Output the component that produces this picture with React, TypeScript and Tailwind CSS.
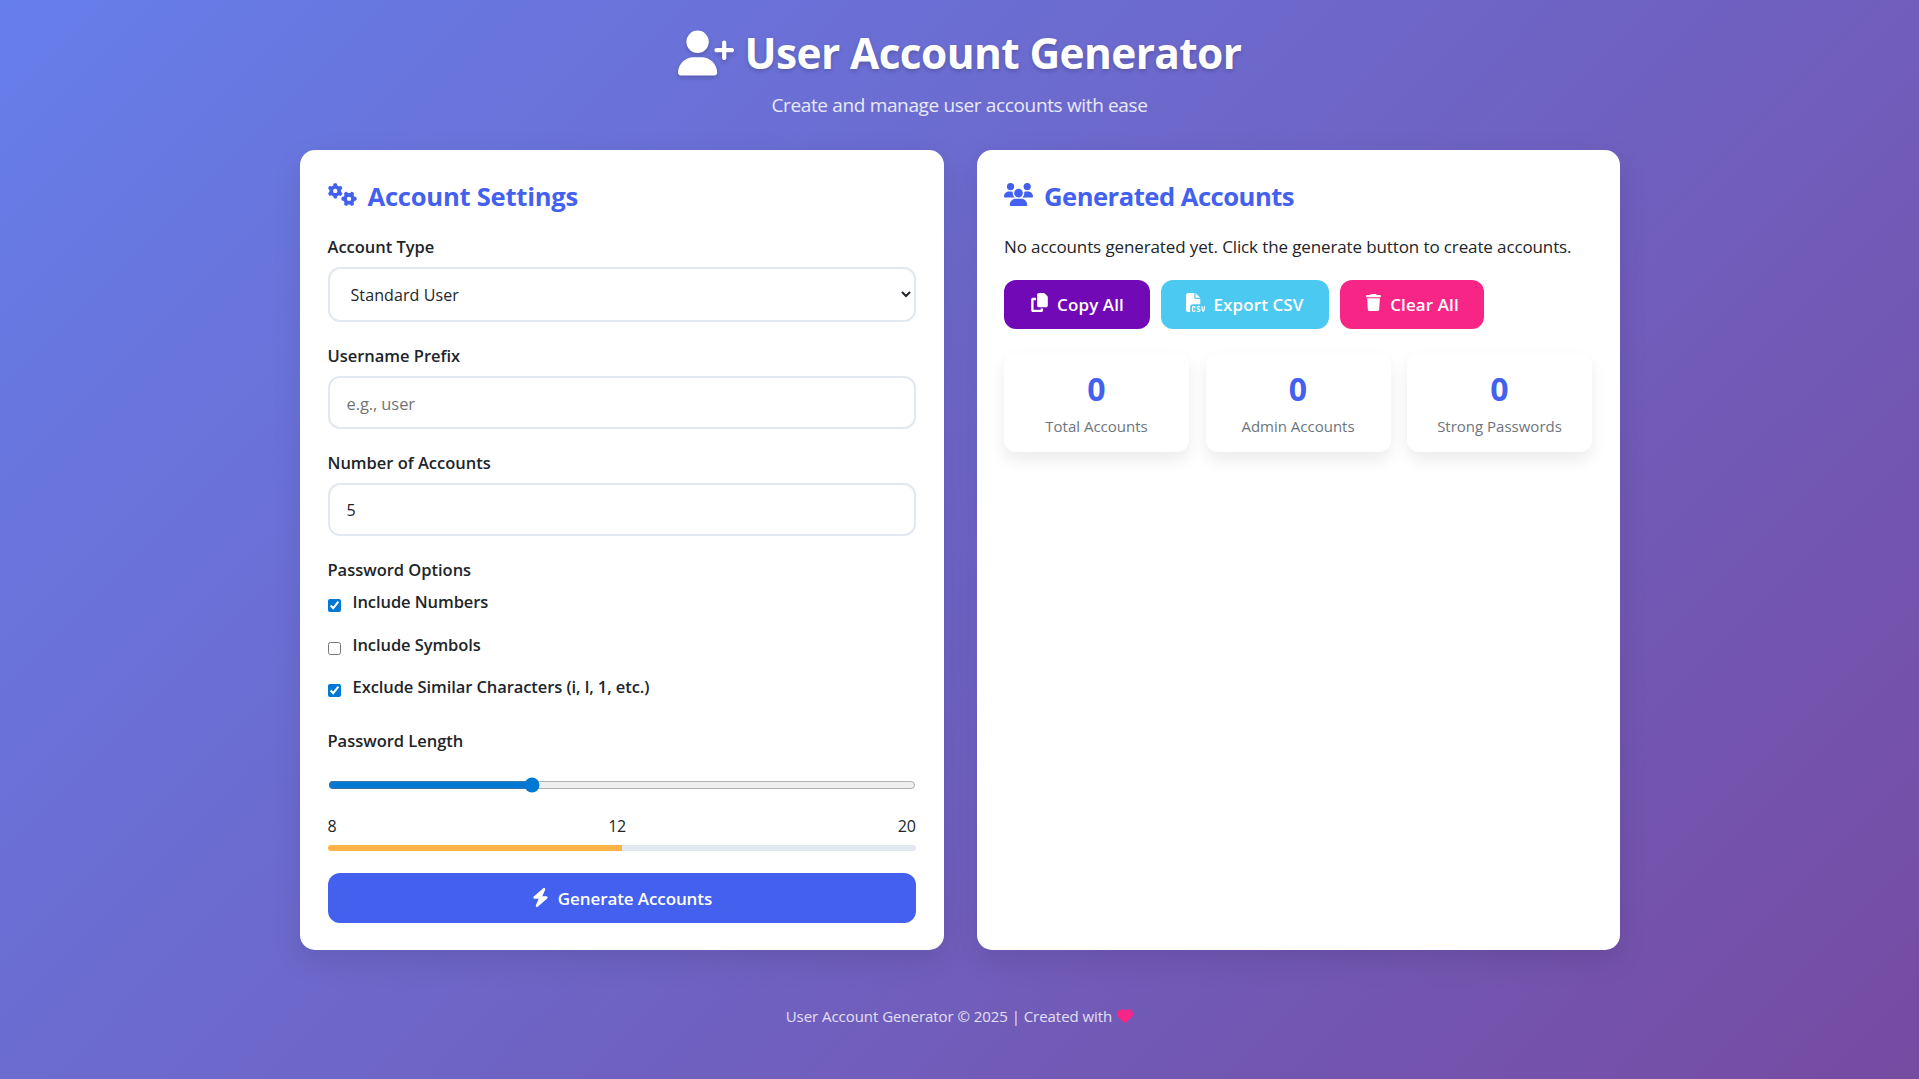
import { FaBolt, FaCopy, FaFileCsv, FaGears, FaHeart, FaTrash, FaUserPlus, FaUsers } from 'react-icons/fa6';

const font = { fontFamily: '"Open Sans", "Noto Sans", sans-serif' };

function Label({ children }: { children: string }) {
  return <label className="block h-6 leading-6 mb-2 font-[550] text-[16.5px] tracking-[-0.02px] text-[#212529]">{children}</label>;
}

function Check({ text, checked }: { text: string; checked?: boolean }) {
  return (
    <div className="flex items-start h-6 mb-[18.5px]">
      <input type="checkbox" defaultChecked={checked} className="w-[13px] h-[13px] mt-[9px] mr-[12px] accent-[#0078d4]" />
      <span className="leading-6 font-[550] text-[16.5px] tracking-[-0.08px] text-[#212529]">{text}</span>
    </div>
  );
}

function Stat({ label }: { label: string }) {
  return (
    <div className="h-[99px] flex-1 rounded-[12px] bg-white shadow-[0_8px_16px_rgba(0,0,0,0.08)] flex flex-col items-center pt-[18px]">
      <div className="h-9 leading-9 text-[32px] font-bold text-[#4361ee]">0</div>
      <div className="mt-[7px] leading-6 text-[15px] text-[#6c757d]">{label}</div>
    </div>
  );
}

function ActionButton({ children, className }: { children: React.ReactNode; className: string }) {
  return (
    <button className={`h-[49px] rounded-[12px] text-white font-semibold text-[17px] tracking-[0.1px] flex items-center justify-center gap-[8px] ${className}`}>
      {children}
    </button>
  );
}

export default function App() {
  return (
    <div style={font} className="min-h-[1079px] bg-[linear-gradient(135deg,#667eea_0%,#764ba2_100%)] flex flex-col items-center">
      <header className="h-[150px] flex flex-col items-center text-white">
        <h1 className="mt-[24px] h-[58px] flex items-center gap-[11px] text-[42.4px] font-bold tracking-[-0.6px] [text-shadow:0_2px_4px_rgba(0,0,0,0.2)]">
          <FaUserPlus size={56} className="drop-shadow-[0_2px_2px_rgba(0,0,0,0.2)]" />
          User Account Generator
        </h1>
        <p className="mt-[9px] text-[19px] tracking-[-0.35px] text-white/85">Create and manage user accounts with ease</p>
      </header>

      <main className="w-[1320px] grid grid-cols-[644px_1fr] gap-[33px]">
        <section className="h-[800px] rounded-[15px] bg-white shadow-[0_10px_30px_rgba(0,0,0,0.1)] px-[28px] pt-[27px]">
          <h2 className="h-10 flex items-center gap-[11px] text-[25.6px] font-bold tracking-[-0.25px] text-[#4361ee] mb-[18px]">
            <FaGears size={29} className="-mt-[6px]" />
            Account Settings
          </h2>

          <Label>Account Type</Label>
          <select className="block w-full h-[55px] rounded-[12px] border-2 border-[#e2e8f0] pl-[17px] pr-[8px] text-[16px] tracking-[0.1px] text-[#212529] mb-[22px]">
            <option>Standard User</option>
            <option>Admin</option>
          </select>

          <Label>Username Prefix</Label>
          <input placeholder="e.g., user" className="block w-full h-[53px] rounded-[12px] border-2 border-[#e2e8f0] pl-[17px] pr-[16px] pt-[1px] text-[16.5px] tracking-[-0.1px] placeholder:text-[#757575] mb-[22px]" />

          <Label>Number of Accounts</Label>
          <input defaultValue="5" className="block w-full h-[53px] rounded-[12px] border-2 border-[#e2e8f0] pl-[17px] pr-[16px] pt-[1px] text-[16px] text-[#212529] mb-[22px]" />

          <Label>Password Options</Label>
          <Check text="Include Numbers" checked />
          <Check text="Include Symbols" />
          <Check text="Exclude Similar Characters (i, l, 1, etc.)" checked />

          <div className="mt-[30px]">
            <Label>Password Length</Label>
          </div>
          <input type="range" min={8} max={20} step={0.01} defaultValue={12.13} className="block w-full h-4 mt-[24px] m-0 accent-[#0078d4]" />
          <div className="flex justify-between mt-[21px] h-6 leading-6 text-[16px] tracking-[-0.3px] text-[#212529]">
            <span>8</span>
            <span>12</span>
            <span>20</span>
          </div>
          <div className="h-[6px] mt-[7px] rounded-[3px] bg-[#e2e8f0] overflow-hidden">
            <div className="h-full w-1/2 bg-[#ffb347]" />
          </div>
          <button className="w-full h-[50px] mt-[22px] pt-[1px] rounded-[12px] bg-[#4361ee] text-white font-semibold text-[17px] tracking-[-0.1px] flex items-center justify-center gap-[8px]">
            <FaBolt size={19} className="-mt-[3px]" />
            Generate Accounts
          </button>
        </section>

        <section className="h-[800px] rounded-[15px] bg-white shadow-[0_10px_30px_rgba(0,0,0,0.1)] px-[27.5px] pt-[27px]">
          <h2 className="h-10 flex items-center gap-[11px] text-[25.6px] font-bold tracking-[-0.5px] text-[#4361ee] mb-[18px]">
            <FaUsers size={29} className="-mt-[6px]" />
            Generated Accounts
          </h2>
          <p className="h-6 leading-6 text-[17px] tracking-[-0.12px] text-[#212529] whitespace-nowrap">No accounts generated yet. Click the generate button to create accounts.</p>

          <div className="flex gap-[11px] mt-[21px]">
            <ActionButton className="w-[146px] bg-[#7209b7]">
              <FaCopy size={19} className="-mt-[4px]" />
              Copy All
            </ActionButton>
            <ActionButton className="w-[168px] bg-[#4cc9f0]">
              <FaFileCsv size={19} className="-mt-[4px]" />
              Export CSV
            </ActionButton>
            <ActionButton className="w-[144px] bg-[#f72585]">
              <FaTrash size={17} className="-mt-[4px]" />
              Clear All
            </ActionButton>
          </div>

          <div className="flex gap-[16.5px] mt-[24px]">
            <Stat label="Total Accounts" />
            <Stat label="Admin Accounts" />
            <Stat label="Strong Passwords" />
          </div>
        </section>
      </main>

      <footer className="mt-[54px] flex items-center gap-[5px] h-6 text-[15px] tracking-[-0.05px] text-white/80">
        User Account Generator © 2025 | Created with
        <FaHeart size={16} className="text-[#f72585]" />
      </footer>
    </div>
  );
}
